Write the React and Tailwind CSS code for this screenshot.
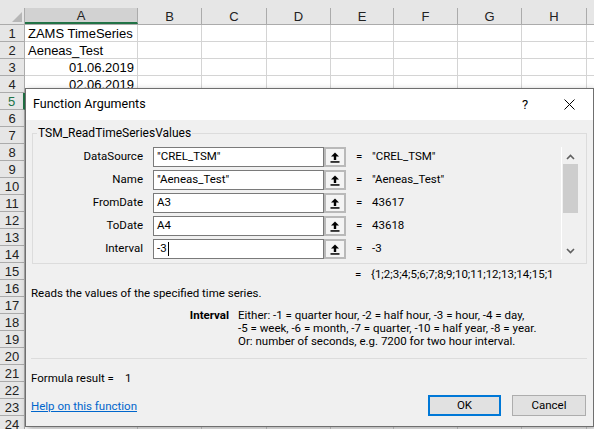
import React from "react";

const cols = [
  { name: "A", w: 113 },
  { name: "B", w: 64 },
  { name: "C", w: 65 },
  { name: "D", w: 64 },
  { name: "E", w: 63 },
  { name: "F", w: 64 },
  { name: "G", w: 64 },
  { name: "H", w: 65 },
  { name: "I", w: 64 },
];

const cells = {
  1: "ZAMS TimeSeries",
  2: "Aeneas_Test",
  3: "01.06.2019",
  4: "02.06.2019",
};

const args = [
  { label: "DataSource", input: '"CREL_TSM"', value: '"CREL_TSM"' },
  { label: "Name", input: '"Aeneas_Test"', value: '"Aeneas_Test"' },
  { label: "FromDate", input: "A3", value: "43617" },
  { label: "ToDate", input: "A4", value: "43618" },
  { label: "Interval", input: "-3", value: "-3", caret: true },
];

const RefButton = () => (
  <div className="w-[22px] h-[20px] border-2 border-[#b9b9b9] bg-[#f4f4f4] flex items-center justify-center">
    <svg width="10" height="11" viewBox="0 0 10 11">
      <path d="M5 0.5 L9 4.5 L6.2 4.5 L6.2 8 L3.8 8 L3.8 4.5 L1 4.5 Z" fill="#000" />
      <rect x="0.5" y="9.2" width="9" height="1.5" fill="#000" />
    </svg>
  </div>
);

const Sheet = () => (
  <div className="bg-white" style={{ fontFamily: '"Liberation Sans", Arial, sans-serif' }}>
    <div className="h-[8px] bg-[#e6e6e6]" />
    {/* column headers */}
    <div className="flex h-[17px] bg-[#e6e6e6] border-b border-[#ababab] text-[13px] text-[#222]">
      <div className="w-[25px] shrink-0 border-r border-[#ababab] relative">
        <svg className="absolute right-[2px] bottom-[2px]" width="10" height="10" viewBox="0 0 10 10">
          <path d="M10 0 L10 10 L0 10 Z" fill="#b7b7b7" />
        </svg>
      </div>
      {cols.map((c) => (
        <div
          key={c.name}
          style={{ width: c.w }}
          className={
            "shrink-0 flex items-center justify-center border-r border-[#ababab] leading-none " +
            (c.name === "A" ? "bg-[#d2d2d2] border-b-2 border-b-[#217346]" : "")
          }
        >
          {c.name}
        </div>
      ))}
    </div>
    {/* rows */}
    {Array.from({ length: 24 }, (_, i) => i + 1).map((r) => (
      <div key={r} className="flex h-[17px] text-[13px]">
        <div
          className={
            "w-[25px] shrink-0 bg-[#e6e6e6] border-b border-r border-[#ababab] flex items-center justify-center leading-none " +
            (r === 5 ? "bg-[#d2d2d2] text-[#217346] border-r-2 border-r-[#217346]" : "text-[#222]")
          }
        >
          {r}
        </div>
        {cols.map((c) => (
          <div
            key={c.name}
            style={{ width: c.w }}
            className={
              "shrink-0 border-r border-b border-[#d4d4d4] flex items-center leading-none whitespace-nowrap overflow-visible px-[3px] text-black " +
              (r >= 3 ? "justify-end" : "")
            }
          >
            {c.name === "A" ? cells[r] || "" : ""}
          </div>
        ))}
      </div>
    ))}
  </div>
);

const Dialog = () => (
  <div
    className="absolute left-[25px] top-[88px] w-[569px] h-[339px] border border-[#6f6f6f] bg-[#f0f0f0] shadow-[2px_2px_6px_rgba(0,0,0,0.35)] flex flex-col text-[11.5px] text-black"
    style={{ fontFamily: 'Roboto, "Noto Sans", sans-serif' }}
  >
    {/* title bar */}
    <div className="h-[31px] bg-white flex items-center pl-[7px] shrink-0">
      <span className="flex-1 text-[12.5px]">Function Arguments</span>
      <span className="w-[10px] mr-[32px] text-[13px]">?</span>
      <svg className="mr-[18px]" width="11" height="11" viewBox="0 0 11 11">
        <path d="M0.5 0.5 L10.5 10.5 M10.5 0.5 L0.5 10.5" stroke="#000" strokeWidth="1" />
      </svg>
    </div>

    <div className="flex-1 flex flex-col pl-[5px] pr-[6px]">
      {/* group box */}
      <div className="relative mt-[13px] ml-[1px] h-[131px] border border-[#dcdcdc] pt-[13px]">
        <span className="absolute left-[4px] -top-[9px] bg-[#f0f0f0] px-[1px] leading-[16px] text-[12px]">
          TSM_ReadTimeSeriesValues
        </span>
        <div className="flex">
          <div className="flex flex-col gap-[3px]">
            {args.map((a) => (
              <div key={a.label} className="flex items-center h-[20px]">
                <div className="w-[110px] text-right">{a.label}</div>
                <div className="ml-[10px] w-[171px] h-[20px] bg-white border border-[#7a7a7a] flex items-center pl-[3px] whitespace-nowrap">
                  {a.input}
                  {a.caret && <span className="inline-block w-[1px] h-[14px] bg-black ml-[1px]" />}
                </div>
                <RefButton />
                <div className="ml-[10px] w-[8px]">=</div>
                <div className="ml-[8px] whitespace-nowrap">{a.value}</div>
              </div>
            ))}
          </div>
          <div className="flex-1" />
          {/* scrollbar */}
          <div className="mr-[8px] w-[17px] h-[112px] border-l border-white flex flex-col items-center">
            <svg className="mt-[7px]" width="9" height="6" viewBox="0 0 9 6">
              <path d="M1 5 L4.5 1.5 L8 5" stroke="#606060" strokeWidth="1.6" fill="none" />
            </svg>
            <div className="mt-[4px] w-[15px] h-[49px] bg-[#cdcdcd]" />
            <div className="flex-1" />
            <svg className="mb-[5px]" width="9" height="6" viewBox="0 0 9 6">
              <path d="M1 1 L4.5 4.5 L8 1" stroke="#606060" strokeWidth="1.6" fill="none" />
            </svg>
          </div>
        </div>
      </div>

      <div className="mt-[2px] h-[16px] leading-[16px] flex whitespace-nowrap overflow-hidden">
        <span className="ml-[324px] w-[8px]">=</span>
        <span className="ml-[8px]">{"{1;2;3;4;5;6;7;8;9;10;11;12;13;14;15;1"}</span>
      </div>

      <div className="mt-[3px] h-[16px] leading-[16px]">Reads the values of the specified time series.</div>

      <div className="mt-[8px] flex leading-[13px]">
        <div className="w-[198px] text-right font-bold">Interval</div>
        <div className="ml-[9px]">
          <div>Either: -1 = quarter hour, -2 = half hour, -3 = hour, -4 = day,</div>
          <div>-5 = week, -6 = month, -7 = quarter, -10 = half year, -8 = year.</div>
          <div>Or: number of seconds, e.g. 7200 for two hour interval.</div>
        </div>
      </div>

      <div className="mt-[10px] h-px bg-[#dcdcdc]" />

      <div className="mt-[11px] h-[16px] leading-[16px] flex">
        <span>Formula result =</span>
        <span className="ml-[11px]">1</span>
      </div>

      <div className="mt-[9px] flex items-center">
        <a className="flex-1 text-[#0066cc] underline mt-[2px]" href="#">
          Help on this function
        </a>
        <button className="w-[73px] h-[21px] border-2 border-[#0078d7] bg-[#e1e1e1] leading-none">OK</button>
        <button className="ml-[11px] mr-[1px] w-[74px] h-[21px] border border-[#adadad] bg-[#e1e1e1] leading-none">
          Cancel
        </button>
      </div>
    </div>
  </div>
);

export default function App() {
  return (
    <div className="relative w-[594px] h-[429px] overflow-hidden bg-white">
      <Sheet />
      <Dialog />
    </div>
  );
}
